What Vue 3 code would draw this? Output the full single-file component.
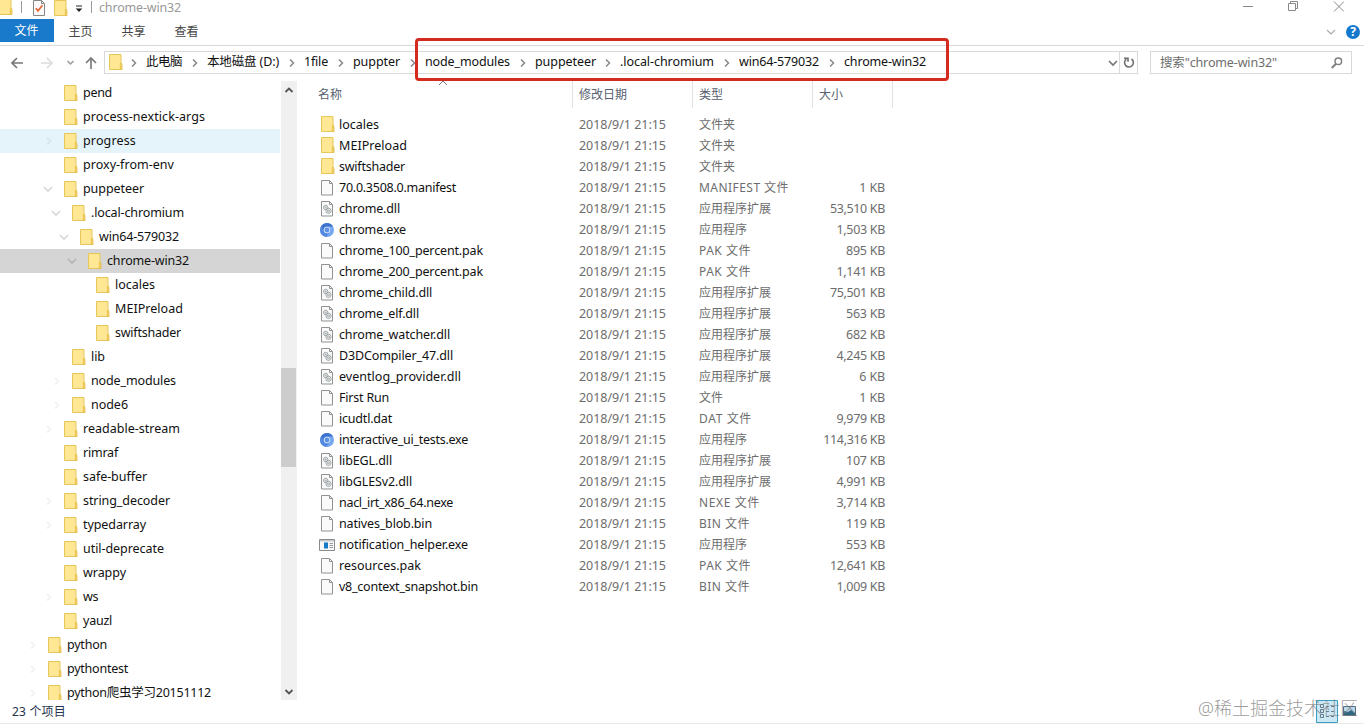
<script setup>
import { onMounted, ref } from 'vue'

const root = ref(null)

const crumbs = [
  ['此电脑', 61, 36], ['本地磁盘 (D:)', 97, 72], ['1file', 49, 24], ['puppter', 72, 47], ['node_modules', 110, 85],
  ['puppeteer', 85, 61], ['.local-chromium', 119, 94], ['win64-579032', 105, 80], ['chrome-win32', 90, 82],
]

// label, indent, arrow, label width
const tree = [
  ['pend', 64, '', 29], ['process-nextick-args', 64, '', 122], ['progress', 64, 'r', 53], ['proxy-from-env', 64, '', 91],
  ['puppeteer', 64, 'd', 61], ['.local-chromium', 72, 'd', 93], ['win64-579032', 80, 'd', 80], ['chrome-win32', 88, 'd', 82],
  ['locales', 96, '', 40], ['MEIPreload', 96, '', 68], ['swiftshader', 96, '', 66], ['lib', 72, '', 14],
  ['node_modules', 72, 'r', 85], ['node6', 72, 'r', 37], ['readable-stream', 64, 'r', 97], ['rimraf', 64, '', 35],
  ['safe-buffer', 64, '', 64], ['string_decoder', 64, 'r', 87], ['typedarray', 64, 'r', 63], ['util-deprecate', 64, '', 81],
  ['wrappy', 64, '', 43], ['ws', 64, 'r', 15], ['yauzl', 64, '', 29], ['python', 48, 'r', 40],
  ['pythontest', 48, 'r', 61], ['python爬虫学习20151112', 48, 'r', 144],
]

// name, icon, type, size, name width
const files = [
  ['locales', 'folder', '文件夹', '', 40],
  ['MEIPreload', 'folder', '文件夹', '', 68],
  ['swiftshader', 'folder', '文件夹', '', 66],
  ['70.0.3508.0.manifest', 'file', 'MANIFEST 文件', '1 KB', 117],
  ['chrome.dll', 'dll', '应用程序扩展', '53,510 KB', 61],
  ['chrome.exe', 'chrome', '应用程序', '1,503 KB', 67],
  ['chrome_100_percent.pak', 'file', 'PAK 文件', '895 KB', 144],
  ['chrome_200_percent.pak', 'file', 'PAK 文件', '1,141 KB', 144],
  ['chrome_child.dll', 'dll', '应用程序扩展', '75,501 KB', 93],
  ['chrome_elf.dll', 'dll', '应用程序扩展', '563 KB', 80],
  ['chrome_watcher.dll', 'dll', '应用程序扩展', '682 KB', 111],
  ['D3DCompiler_47.dll', 'dll', '应用程序扩展', '4,245 KB', 114],
  ['eventlog_provider.dll', 'dll', '应用程序扩展', '6 KB', 122],
  ['First Run', 'file', '文件', '1 KB', 50],
  ['icudtl.dat', 'file', 'DAT 文件', '9,979 KB', 53],
  ['interactive_ui_tests.exe', 'chrome', '应用程序', '114,316 KB', 129],
  ['libEGL.dll', 'dll', '应用程序扩展', '107 KB', 53],
  ['libGLESv2.dll', 'dll', '应用程序扩展', '4,991 KB', 73],
  ['nacl_irt_x86_64.nexe', 'file', 'NEXE 文件', '3,714 KB', 114],
  ['natives_blob.bin', 'file', 'BIN 文件', '119 KB', 93],
  ['notification_helper.exe', 'program', '应用程序', '553 KB', 129],
  ['resources.pak', 'file', 'PAK 文件', '12,641 KB', 82],
  ['v8_context_snapshot.bin', 'file', 'BIN 文件', '1,009 KB', 139],
]

const typeWidth = { 'MANIFEST 文件': 90, 'PAK 文件': 52, 'DAT 文件': 53, 'NEXE 文件': 61, 'BIN 文件': 51 }
const sizeWidth = (s) => [...s].reduce((w, c) => w + (c === ',' ? 3 : c === ' ' ? 4.5 : c === 'K' || c === 'B' ? 7.3 : 6.6), 0)

onMounted(() => {
  root.value.querySelectorAll('[data-w]').forEach((el) => {
    const want = Number(el.dataset.w)
    if (!want) return
    const have = el.getBoundingClientRect().width
    el.style.letterSpacing = `${(want - have) / el.textContent.length}px`
  })
})
</script>

<template>
  <div ref="root" class="window">
    <svg class="defs" width="0" height="0">
      <symbol id="folder" viewBox="0 0 16 18">
        <path d="M.5 1.500h11.500v9.500l.7 1v4.500H.5z" fill="#ffe794" stroke="#e6c659" />
        <path d="M11.300 16.500v-5l.8-1.500.8 1.500v5z" fill="#fbdc73" stroke="#dfba45" stroke-width=".8" />
      </symbol>
      <symbol id="file" viewBox="0 0 16 18">
        <path d="M1.500 1.500h8l3 3v11.500h-11z" fill="#fafafa" stroke="#929292" />
        <path d="M9.500 1.500v3h3" fill="none" stroke="#929292" />
      </symbol>
      <symbol id="dll" viewBox="0 0 16 18">
        <path d="M1.500 1.500h8l3 3v11.500h-11z" fill="#fafafa" stroke="#929292" />
        <path d="M9.500 1.500v3h3" fill="none" stroke="#929292" />
        <g fill="none" stroke="#929a9d" stroke-width=".9">
          <circle cx="5.700" cy="7.500" r="2.200" /><circle cx="5.700" cy="7.500" r=".6" />
          <circle cx="8.500" cy="10.800" r="2.600" /><circle cx="8.500" cy="10.800" r="1" />
        </g>
      </symbol>
      <symbol id="chrome" viewBox="0 0 16 18">
        <circle cx="7" cy="9" r="7" fill="#76a7f0" />
        <path d="M1 5.500A7 7 0 0 1 13.100 5.500H7A3.400 3.400 0 0 0 4 10.600z" fill="#3d72cd" />
        <path d="M1 5.500A7 7 0 0 0 6.400 16l3.400-5.300A3.300 3.300 0 0 1 4 10.600z" fill="#5288de" />
        <circle cx="7" cy="9" r="3.200" fill="#d3e3fb" /><circle cx="7" cy="9" r="2.400" fill="#5c92e6" />
      </symbol>
      <symbol id="program" viewBox="0 0 16 18">
        <path d="M.5 3.500h15v11H.5z" fill="#f6f8fa" stroke="#878b8e" />
        <path d="M1 4h14v1.500H1z" fill="#c4cace" />
        <path d="M5 6.500h4v6H5z" fill="#147ac7" />
        <path d="M10.500 7.500h3.500M10.500 9.500h3.500M10.500 11.500h3.500" stroke="#999" />
      </symbol>
      <symbol id="right" viewBox="0 0 8 10"><path d="M2 1.500 5.500 5 2 8.500" fill="none" stroke="currentColor" stroke-width="1.500" /></symbol>
      <symbol id="down" viewBox="0 0 10 8"><path d="M1 2l4 4 4-4" fill="none" stroke="currentColor" stroke-width="1.700" /></symbol>
    </svg>

    <header class="title">
      <svg class="q1" width="16" height="18"><use href="#folder" /></svg>
      <i class="bar b1"></i>
      <svg class="q2" width="14" height="18" viewBox="0 0 14 18"><path d="M1.500.5h8l3 3v12h-11z" fill="#fafafa" stroke="#868686" /><path d="M9.500.5v3h3" fill="none" stroke="#868686" /><path d="M3.800 8.200 6 10.800l4.500-5.500" fill="none" stroke="#e56636" stroke-width="1.700" /></svg>
      <svg class="q3" width="16" height="18"><use href="#folder" /></svg>
      <svg class="q4" width="8" height="8" viewBox="0 0 8 8"><path d="M1 .5h6v1H1zM.7 3.500h6.600L4 7z" fill="#222" /></svg>
      <i class="bar b2"></i>
      <span class="caption" data-w="82">chrome-win32</span>
      <svg class="controls" width="104" height="14" viewBox="0 0 104 14" fill="none" stroke="#888">
        <path d="M3 6.500h10M48.500 3.500h7v7h-7zM50.500 3.500v-2h7v7h-2M94 1.500l10 10M104 1.500l-10 10" />
      </svg>
    </header>

    <nav class="tabs">
      <span class="tab active">文件</span><span class="tab">主页</span><span class="tab">共享</span><span class="tab">查看</span>
      <svg class="fold" width="10" height="8" viewBox="0 0 10 8"><path d="M1 2l4 4 4-4" fill="none" stroke="#aaa" stroke-width="1.200" /></svg>
      <span class="help">?</span>
    </nav>

    <div class="address">
      <svg class="arrows" width="104" height="23" viewBox="0 0 104 23" fill="none" stroke-width="1.700">
        <path d="M23 12H12.500M17 7l-5 5 5 5" stroke="#777" />
        <path d="M41 12h10.500M47 7l5 5-5 5" stroke="#dcdcdc" />
        <path d="M67.500 10l3 3 3-3" stroke="#999" stroke-width="1.500" />
        <path d="M91 18V7M86 12l5-5 5 5" stroke="#7b7b7b" />
      </svg>
      <div class="path">
        <svg class="pfolder" width="16" height="18"><use href="#folder" /></svg>
        <svg class="chev first" width="8" height="10"><use href="#right" /></svg>
        <span v-for="(c, i) in crumbs" :key="c[0]" class="crumb" :style="{ width: c[1] + 'px' }">
          <span :data-w="c[2]">{{ c[0] }}</span>
          <svg v-if="i < crumbs.length - 1" class="chev" width="8" height="10"><use href="#right" /></svg>
        </span>
        <svg class="drop" width="10" height="8"><use href="#down" /></svg>
        <span class="refresh">
          <svg width="12" height="13" viewBox="0 0 12 13" fill="none" stroke="#707070" stroke-width="1.600"><path d="M3.300 3.100A4.400 4.400 0 1 0 8.500 3M1 2.200h4v3.500" /></svg>
        </span>
      </div>
      <div class="search">
        <span data-w="117">搜索"chrome-win32"</span>
        <svg width="12" height="12" viewBox="0 0 12 12" fill="none" stroke="#808080"><circle cx="7.300" cy="4.300" r="3.300" stroke-width="1.500" /><path d="M5 6.800.8 11" stroke-width="2" /></svg>
      </div>
    </div>

    <main class="body">
      <aside class="tree">
        <div v-for="(t, i) in tree" :key="i" class="node" :class="{ hover: i === 2, selected: i === 7 }" :style="{ paddingLeft: t[1] - 21 + 'px' }">
          <span class="toggle" :class="t[2]">
            <svg v-if="t[2] === 'r'" width="8" height="10"><use href="#right" /></svg>
            <svg v-if="t[2] === 'd'" width="10" height="8"><use href="#down" /></svg>
          </span>
          <svg class="icon" width="16" height="18"><use href="#folder" /></svg>
          <span :data-w="t[3]">{{ t[0] }}</span>
        </div>
      </aside>
      <div class="scroll">
        <svg width="10" height="8" viewBox="0 0 10 8"><path d="M1.500 6 5 2.500 8.500 6" fill="none" stroke="#555" stroke-width="1.800" /></svg>
        <i class="thumb"></i>
        <svg width="10" height="8" viewBox="0 0 10 8"><path d="M1.500 2 5 5.500 8.500 2" fill="none" stroke="#555" stroke-width="1.800" /></svg>
      </div>
      <section class="list">
        <div class="heads">
          <span class="h name">名称<svg class="sort" width="10" height="6" viewBox="0 0 10 6"><path d="M1 5l4-4 4 4" fill="none" stroke="#777" /></svg></span>
          <span class="h date">修改日期</span><span class="h type">类型</span><span class="h size">大小</span>
        </div>
        <div v-for="f in files" :key="f[0]" class="row">
          <svg class="icon" :class="f[1]" width="16" height="18"><use :href="'#' + f[1]" /></svg>
          <span class="fname"><span :data-w="f[4]">{{ f[0] }}</span></span>
          <span class="fdate"><span data-w="87">2018/9/1 21:15</span></span>
          <span class="ftype"><span :data-w="typeWidth[f[2]] || 0">{{ f[2] }}</span></span>
          <span class="fsize"><span :data-w="sizeWidth(f[3])">{{ f[3] }}</span></span>
        </div>
      </section>
    </main>

    <footer class="status"><span data-w="54">23 个项目</span></footer>
    <div class="view">
      <svg width="46" height="23" viewBox="0 0 46 23">
        <path d="M.5.5h21v22H.5z" fill="#cce8f7" stroke="#3a9fc0" />
        <g fill="none" stroke="#667c88"><path d="M4.500 4.500h3v3h-3zM4.500 9.500h3v3h-3zM4.500 14.500h3v3h-3zM10 6.500h3M15 6.500h3M10 11.500h3M15 11.500h3M10 16.500h3M15 16.500h3" /></g>
        <path d="M27.500 6.500h12v9h-12z" fill="#b9d9ed" stroke="#566b77" /><path d="M28 14v-3l4 1 3-2 4 3v2H28z" fill="#326783" />
      </svg>
    </div>
    <div class="watermark"><span data-w="160">@稀土掘金技术社区</span></div>
    <div class="highlight"></div>
  </div>
</template>

<style>
body { margin: 0; background: #fff; }
</style>

<style scoped>
.window { position: relative; width: 1364px; height: 724px; overflow: hidden; background: #fff; color: #111; font: 12.5px/16px "Noto Sans", "Noto Sans CJK SC", sans-serif; white-space: nowrap; display: flex; flex-direction: column; box-sizing: border-box; border-bottom: 1px solid #e8e8e8; }
.window * { box-sizing: border-box; }
.defs { position: absolute; }
svg { flex: none; display: block; }
.title { height: 19px; display: flex; align-items: flex-start; flex: none; overflow: hidden; }
.q1 { margin-left: -1px; margin-top: -2px; }
.bar { width: 1px; height: 12px; margin-top: 1px; background: #999; flex: none; }
.b1 { margin-left: 6px; }
.q2 { margin-left: 10px; }
.q3 { margin-left: 8px; margin-top: -1px; }
.q4 { margin: 5px 0 0 5px; }
.b2 { margin-left: 8px; }
.caption { margin-left: 7px; color: #999; }
.controls { margin-left: auto; margin-right: 20px; }
.tabs { height: 27px; flex: none; border-bottom: 1px solid #d9d9d9; display: flex; font-size: 12px; color: #444; }
.tab { width: 53px; height: 23px; line-height: 26px; text-align: center; }
.active { width: 54px; line-height: 24px; background: #1979ca; color: #fff; padding-right: 1px; }
.fold { margin: 9px 10px 0 auto; }
.help { margin: 6px 4px 0 0; width: 14px; height: 14px; border-radius: 50%; background: #1479cc; color: #fff; font-weight: 700; line-height: 14px; text-align: center; }
.address { display: flex; height: 23px; margin-top: 5px; flex: none; }
.path { width: 1034px; border: 1px solid #d9d9d9; display: flex; align-items: center; }
.pfolder { margin-left: 4px; margin-top: -1px; }
.pfolder + .first { margin: 0 8px 0 5px; }
.crumb { display: flex; align-items: center; justify-content: space-between; flex: none; padding-right: 8px; }
.crumb > span { margin-top: -1px; }
.chev { color: #888; }
.drop { margin-left: auto; color: #777; margin-right: 1px; }
.refresh { width: 18px; align-self: stretch; border-left: 1px solid #d9d9d9; display: flex; align-items: center; justify-content: center; flex: none; }
.search { margin-left: 12px; width: 202px; border: 1px solid #d9d9d9; display: flex; align-items: center; justify-content: space-between; padding: 0 8px 0 9px; color: #6d6d6d; }
.body { display: flex; height: 619px; margin-top: 7px; flex: none; }
.tree { width: 281px; overflow: hidden; }
.node { height: 24px; width: 280px; display: flex; align-items: center; }
.hover { background: #e5f3fb; }
.selected { background: #d5d5d5; }
.toggle { width: 20px; color: #f0f0f0; }
.toggle.r { padding-left: 2px; }
.toggle.d { color: #d8d8d8; }
.hover .toggle { color: #d3e5ef; }
.selected .toggle.d { color: #b4b4b4; }
.node .icon { margin: -1px 3px 0 1px; }
.scroll { width: 16px; background: #f0f0f0; display: flex; flex-direction: column; align-items: center; padding: 5px 1px 4px 0; }
.thumb { width: 15px; height: 99px; margin: 274px 0 auto; background: #cdcdcd; }
.list { width: 1067px; }
.heads { display: flex; height: 33px; color: #57616f; font-size: 12px; }
.h { height: 27px; line-height: 27px; border-right: 1px solid #e2e2e2; padding-left: 6px; }
.name { width: 276px; padding-left: 21px; position: relative; }
.sort { position: absolute; left: 141px; top: -1px; }
.date, .type { width: 120px; }
.size { width: 80px; }
.row { height: 21px; display: flex; align-items: center; padding-left: 22px; color: #6d6d6d; }
.row .icon { margin: 0 3px 0 1px; }
.row .folder { margin: -1px 2px 0 2px; }
.row .program { margin: 0 4px 0 0; }
.fname { width: 240px; color: #111; }
.fdate { width: 120px; }
.ftype { width: 107px; font-size: 12px; }
.fsize { width: 79px; text-align: right; }
.status { height: 23px; line-height: 24px; padding-left: 12px; color: #25344d; font-size: 12px; flex: none; }
.view { position: absolute; left: 1316px; top: 700px; }
.watermark { position: absolute; left: 1198px; top: 697px; font-size: 18px; line-height: 22px; font-weight: 300; color: rgba(130, 130, 130, .8); }
.highlight { position: absolute; left: 415px; top: 38px; width: 534px; height: 43px; border: 3px solid #d52b1e; border-radius: 4px; }
</style>
